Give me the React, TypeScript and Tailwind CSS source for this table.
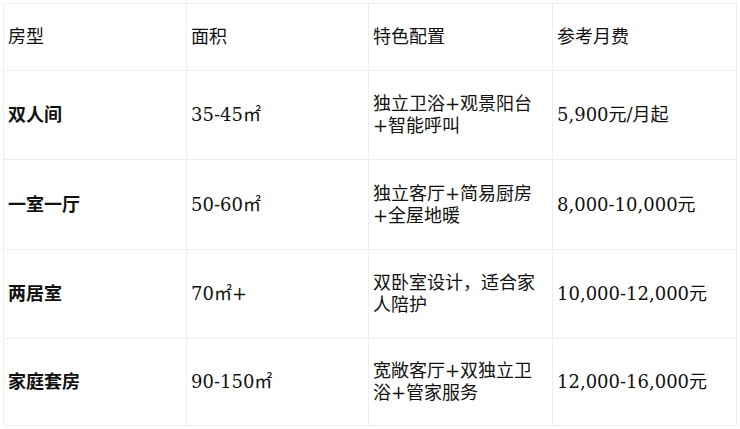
import React from 'react';

const rows = [
    { type: '双人间', area: '35-45㎡', feature: '独立卫浴+观景阳台+智能呼叫', price: '5,900元/月起', h: 'h-[89px]' },
    { type: '一室一厅', area: '50-60㎡', feature: '独立客厅+简易厨房+全屋地暖', price: '8,000-10,000元', h: 'h-[90px]' },
    { type: '两居室', area: '70㎡+', feature: '双卧室设计，适合家人陪护', price: '10,000-12,000元', h: 'h-[89px]' },
    { type: '家庭套房', area: '90-150㎡', feature: '宽敞客厅+双独立卫浴+管家服务', price: '12,000-16,000元', h: 'h-[87px]' },
];

const cell = 'border border-[#eeeeee] px-[4px] align-middle text-left';

const App: React.FC = () => {
    return (
        <div className="bg-white min-h-screen pl-[3px] pt-[3px] text-[18px] leading-[22px] text-[#111111] [font-family:'DejaVu_Serif','Noto_Sans_CJK_SC',serif]">
            <table className="table-fixed w-[733px]">
                <colgroup>
                    <col className="w-[183px]" />
                    <col className="w-[182px]" />
                    <col className="w-[184px]" />
                    <col className="w-[184px]" />
                </colgroup>
                <thead>
                    <tr className="h-[67px]">
                        <th className={`${cell} font-normal`}>房型</th>
                        <th className={`${cell} font-normal`}>面积</th>
                        <th className={`${cell} font-normal`}>特色配置</th>
                        <th className={`${cell} font-normal`}>参考月费</th>
                    </tr>
                </thead>
                <tbody>
                    {rows.map(r => (
                        <tr key={r.type} className={r.h}>
                            <td className={`${cell} font-bold`}>{r.type}</td>
                            <td className={cell}>{r.area}</td>
                            <td className={cell}>{r.feature}</td>
                            <td className={cell}>{r.price}</td>
                        </tr>
                    ))}
                </tbody>
            </table>
        </div>
    );
};

export default App;
